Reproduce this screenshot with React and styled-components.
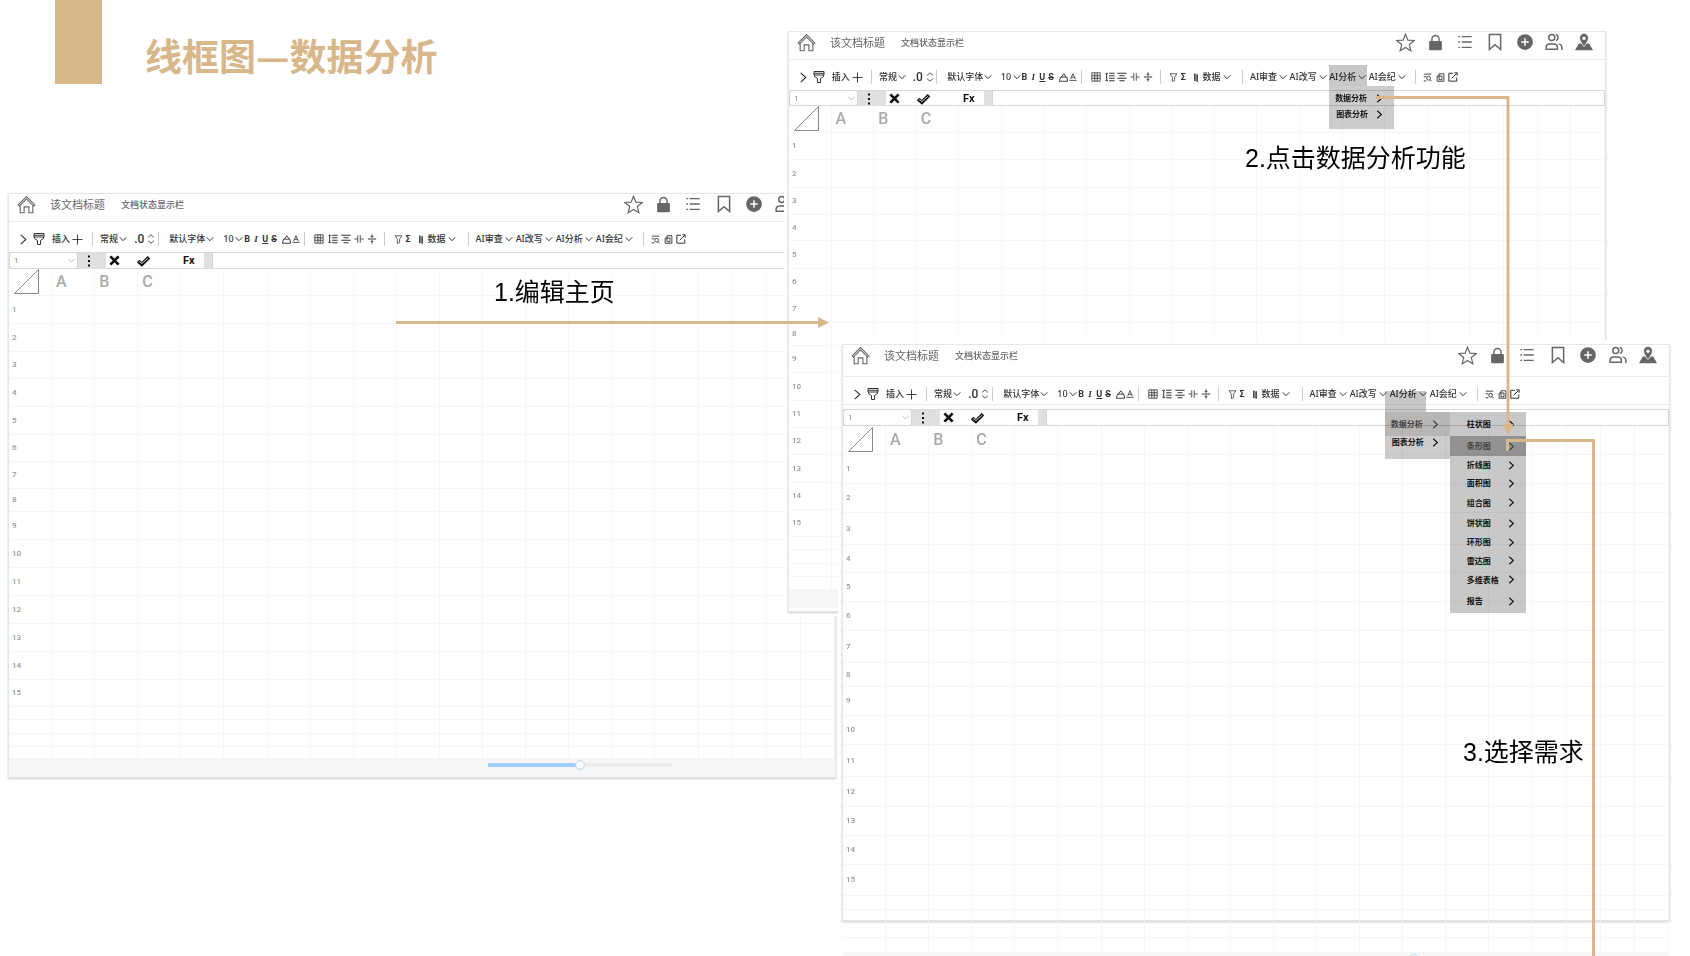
import React from 'react'
import styled, { createGlobalStyle, css } from 'styled-components'

const GlobalStyle = createGlobalStyle`
*, *::before, *::after {
  box-sizing: border-box;
}

body {
  margin: 0;
  background: #fff;
  color: #333;
  font-family: "Noto Sans", "Noto Sans CJK SC", sans-serif;
}

button, input, select {
  margin: 0;
  padding: 0;
  border: 0;
  background: none;
  color: inherit;
  font: inherit;
}
`

const gold = '#d8b78b'

const Board = styled.main`
position: relative;
width: 100%;
min-height: 100vh;
overflow: hidden;
`

const Heading = styled.header`
display: flex;
gap: 43px;
padding-left: 55px;
`

const Marker = styled.span`
width: 47px;
height: 84px;
background: ${gold};
`

const Title = styled.h1`
margin: 0;
padding-top: 29px;
color: ${gold};
font-family: "Noto Sans CJK SC", sans-serif;
font-size: 37px;
font-weight: 700;
line-height: 52px;
`

// each sheet is a window lying on the board
const Frame = styled.section`
position: absolute;
z-index: ${props => props.$z};
left: ${props => props.$x}px;
top: ${props => props.$y}px;
width: ${props => props.$width};
height: ${props => props.$height}px;
background: #fff;
border: 1px solid #e6e6e6;
box-shadow: 0 1px 2px rgba(0, 0, 0, 0.2), 0 0 0 4px #fff;
`

const DocBar = styled.div`
display: flex;
align-items: flex-start;
height: ${props => props.$height}px;
padding: 0 6px 0 8px;
border-bottom: 1px solid #ececec;
line-height: 21px;
color: #666;
`

const DocTitle = styled.h2`
margin: 0 16px 0 14px;
font-size: 11px;
font-weight: 400;
`

const DocStatus = styled.span`
font-size: 9px;
font-weight: 500;
`

const IconButton = styled.button`
display: flex;
align-items: center;
justify-content: ${props => props.$center ? 'center' : 'flex-start'};
height: 20px;
color: inherit;
cursor: pointer;

svg {
  flex: none;
}
`

const DocActions = styled.div`
display: grid;
grid-template-columns: repeat(7, 1fr);
width: 26%;
margin-left: auto;
`

const ToolBar = styled.div`
display: grid;
grid-template-columns: ${props => props.$columns};
align-items: center;
height: ${props => props.$height}px;
margin-bottom: ${props => props.$gap}px;
padding: 7px 0 3px 9px;
border-bottom: ${props => props.$gap ? '1px solid #ececec' : '0'};
color: #333;
font-size: 9px;
font-weight: 500;
line-height: 20px;
`

const Tool = styled.div`
position: relative;
display: flex;
align-items: center;
height: 20px;
white-space: nowrap;
`

const ToolButton = styled.button`
display: flex;
align-items: center;
gap: 2px;
height: 20px;
cursor: pointer;

svg {
  flex: none;
}
`

const Glyph = styled.span`
font-family: ${props => props.$serif ? '"Liberation Serif", serif' : 'Roboto, sans-serif'};
font-size: 9px;
font-weight: 700;
font-style: ${props => props.$italic ? 'italic' : 'normal'};
text-decoration: ${props => props.$line || 'none'};
`

const Decimal = styled.span`
font-family: Roboto, sans-serif;
font-size: 12px;
`

const Divider = styled.span`
width: 1px;
height: 14px;
background: #ccc;
`

const Picker = styled.label`
display: flex;
align-items: center;
gap: 1px;

select {
  width: ${props => props.$width}px;
  height: 20px;
  appearance: none;
}
`

const Popover = styled.div`
position: absolute;
top: ${props => props.$top}px;
left: ${props => props.$left}px;
z-index: 2;
mix-blend-mode: multiply;
color: #111;
font-size: 8px;
font-weight: 700;
line-height: 16px;
`

const Tab = styled.div`
width: ${props => props.$width}px;
height: 21px;
background: #c9c7c7;
`

const Menu = styled.div`
width: ${props => props.$width}px;
height: ${props => props.$height}px;
padding-top: ${props => props.$top}px;
background: ${props => props.$sub ? '#c8c8c8' : '#cdcbcb'};

${props => props.$sub && css`
  position: absolute;
  top: 21px;
  left: 100%;
`}
`

const MenuItem = styled.button`
display: flex;
align-items: center;
justify-content: space-between;
width: 100%;
height: ${props => props.$height}px;
padding: 0 10px 0 ${props => props.$indent}px;
background: ${props => props.$active || 'none'};
color: ${props => props.$active ? '#444' : 'inherit'};
cursor: pointer;
`

const FormulaBar = styled.div`
display: flex;
height: ${props => props.$height}px;
border-top: 1px solid #d8d8d8;
background: #e0e0e0;
color: #111;
`

const NameBox = styled.label`
display: flex;
align-items: center;
width: 69px;
padding: 0 2px 0 4px;
background: #fff;
border: 1px solid #d6d6d6;
border-top: 0;
border-radius: 3px;
color: #888;

select {
  flex: 1;
  font-family: Roboto, sans-serif;
  font-size: 8px;
  appearance: none;
}
`

const DotsButton = styled.button`
display: flex;
align-items: center;
width: 28px;
padding-left: 5px;
`

const FormulaActions = styled.div`
display: flex;
align-items: center;
width: 98px;
margin-right: 8px;
padding-left: 3px;
background: #fff;
border-bottom: 1px solid #d6d6d6;

button {
  display: flex;
  align-items: center;
  height: 14px;
}

button + button {
  margin-left: 17px;
}

button:last-child {
  margin-left: 33px;
  font-family: Roboto, sans-serif;
  font-size: 11px;
  font-weight: 700;
}
`

const FormulaInput = styled.input`
flex: 1;
min-width: 0;
padding: 0 4px;
background: #fff;
border: 1px solid #d6d6d6;
border-top: 0;
font-size: 9px;
`

const Grid = styled.table`
width: 100%;
table-layout: fixed;
border-spacing: 0;
font-family: Roboto, sans-serif;

th, td {
  padding: 0;
  border: 0 solid #f6f6f6;
  border-width: 0 1px 1px 0;
  text-align: left;
}
`

const Row = styled.tr`
height: ${props => props.$height}px;

th {
  padding-left: 3px;
  color: #999;
  font-size: 8px;
  font-weight: 500;
  line-height: 12px;
}
`

const ColumnRow = styled.tr`
height: ${props => props.$height}px;

th {
  padding-left: 4px;
  color: #aaa;
  font-size: 16px;
  font-weight: 500;
  line-height: 20px;
}

svg {
  display: block;
}
`

const Footer = styled.div`
display: flex;
height: 18px;
background: #f6f6f6;
`

const Zoom = styled.input`
width: 184px;
height: 12px;
margin-left: 58%;
appearance: none;
background: linear-gradient(90deg, #a3ccf7 50%, #ececec 50%) center / 100% 4px no-repeat;

&::-webkit-slider-thumb {
  appearance: none;
  width: 10px;
  height: 10px;
  background: #f8fbff;
  border: 1px solid #bdd9f6;
  border-radius: 50%;
}
`

const Note = styled.p`
position: absolute;
z-index: 5;
left: ${props => props.$x}px;
top: ${props => props.$y}px;
margin: 0;
color: #000;
font-family: "Liberation Sans", "Noto Sans CJK SC", sans-serif;
font-size: 25px;
line-height: 36px;
white-space: nowrap;
`

const Connectors = styled.svg`
position: absolute;
inset: 0;
z-index: 4;
width: 100%;
height: 100%;
pointer-events: none;
`

const Svg = ({ size = 10, w = 2, children, ...rest }) => (
  <svg width={size} height={size} viewBox="0 0 24 24" fill="none" stroke="currentColor" strokeWidth={w} aria-hidden="true" {...rest}>
    {children}
  </svg>
)

const Down = () => <Svg size={8} w={3}><path d="M2 7l10 10L22 7" /></Svg>
const Right = ({ size = 9, w = 3 }) => <Svg size={size} w={w}><path d="M6 2l11 10L6 22" /></Svg>

const icons = {
  home: <Svg size={19} w={1.4}><path d="M1.500 12.500L12 2l10.500 10.500-1.500 1.500L12 5l-9 9zM4 13v9.500h5V15h6v7.500h5V13" /></Svg>,
  star: <Svg size={19} w={1.5}><path d="M12 1.500l3 7.500 8 .5-6.200 5.100 2 7.900L12 18.200 5.200 22.500l2-7.900L1 9.500l8-.5z" /></Svg>,
  lock: <Svg size={17}><rect x="3" y="10" width="18" height="13" rx="1.500" fill="currentColor" stroke="none" /><path d="M7 11V7a5 5 0 0 1 10 0v4" /></Svg>,
  list: <Svg size={16}><path d="M7 4h15M7 12h15M7 20h15M2 4h2.500M2 12h2.500M2 20h2.500" /></Svg>,
  bookmark: <Svg size={18}><path d="M4.500 2h15v20L12 15.500 4.500 22z" /></Svg>,
  add: <Svg size={18}><circle cx="12" cy="12" r="10.500" fill="currentColor" stroke="none" /><path d="M12 7v10M7 12h10" stroke="#fff" /></Svg>,
  users: <Svg size={18}><circle cx="9" cy="6" r="4" /><path d="M14.500 2a4.200 4.200 0 0 1 0 8M1.500 21.500V19a4.500 4.500 0 0 1 4.500-4.500h6a4.500 4.500 0 0 1 4.500 4.500v2.500zM18 14.500c3 .5 4.500 2.500 4.500 5v3" /></Svg>,
  person: <Svg size={18}><path d="M0 23l5-9h14l5 9z" fill="currentColor" stroke="none" /><path d="M12 0.500a6 6 0 0 0-6 6.200c0 4.300 6 11.300 6 11.300s6-7 6-11.300a6 6 0 0 0-6-6.200z" fill="currentColor" stroke="#fff" strokeWidth="1.200" /><circle cx="12" cy="7" r="2.200" fill="#fff" stroke="none" /></Svg>,
  brush: <Svg size={12}><path d="M2 1h20v7H2zM2 4.500h20M3 8v3l6 4v8h6v-8l6-4V8" /></Svg>,
  plus: <Svg size={11}><path d="M12 1v22M1 12h22" /></Svg>,
  stepper: <Svg size={10}><path d="M5 8l7-6 7 6M5 16l7 6 7-6" /></Svg>,
  bucket: <Svg size={9} w={2.5}><path d="M6 11L13 2l6 9M4 11h17l2 11H1z" /></Svg>,
  tint: <Svg size={8} w={2.5}><path d="M5 18L12 2l7 16M7 13h10M1 22h22" /></Svg>,
  table: <Svg size={10}><path d="M2 2h20v20H2zM2 9h20M2 15h20M9 2v20M15 2v20" /></Svg>,
  spacing: <Svg size={10} w={2.4}><path d="M10 3h13M10 9h13M10 15h13M10 21h13M4 3v18M1 5l3-3 3 3M1 19l3 3 3-3" /></Svg>,
  center: <Svg size={10} w={2.4}><path d="M1 3h22M6 9h12M1 15h22M6 21h12" /></Svg>,
  split: <Svg size={10}><path d="M1 12h7M16 12h7M9 3v18M15 3v18" /></Svg>,
  merge: <Svg size={10} w={2.4}><path d="M2 12h20M12 1v7M12 16v7M9 5l3 3 3-3M9 19l3-3 3 3" /></Svg>,
  filter: <Svg size={9}><path d="M3 2h18l-6 9v9l-6 3V11z" /></Svg>,
  bars: <Svg size={9} w={4}><path d="M5 1v20M11 3v20" /></Svg>,
  find: <Svg size={9} w={2.4}><path d="M2 3h20M2 10h7M2 21h7" /><circle cx="15" cy="14" r="5" /><path d="M19 18l4 4" /></Svg>,
  copy: <Svg size={9} w={2.4}><path d="M8 2h13v20H3V8h5zM8 8h8v10H8z" /></Svg>,
  share: <Svg size={10} w={2.4}><path d="M12 3H2v19h19V13M9 15L21 3M15 2h7v7" /></Svg>,
  cross: <Svg size={11} w={6}><path d="M3 3l18 18M21 3L3 21" /></Svg>,
  check: <Svg size={13}><path d="M2 13l7 6L22 6" strokeWidth="6.500" /><path d="M4 14l5 3.500L20 8" stroke="#fff" strokeWidth="1.500" /></Svg>,
  dots: <Svg size={12}><path d="M12 1v4M12 10v4M12 19v4" strokeWidth="4" /></Svg>,
}

const docActions = [
  ['收藏', 'star'],
  ['锁定', 'lock'],
  ['目录', 'list'],
  ['书签', 'bookmark'],
  ['添加', 'add'],
  ['协作', 'users'],
  ['账户', 'person'],
]

// span is the share of the toolbar's width
const tools = [
  { span: 15, icon: 'chevron', label: '展开' },
  { span: 19, icon: 'brush', label: '格式刷' },
  { span: 40, text: '插入', icon: 'plus' },
  { span: 8, divider: true },
  { span: 34, pick: '常规', width: 18, label: '格式' },
  { span: 24, decimal: true, icon: 'stepper', label: '小数位' },
  { span: 11, divider: true },
  { span: 54, pick: '默认字体', width: 36, label: '字体' },
  { span: 21, pick: '10', width: 11, label: '字号' },
  { span: 10, glyph: 'B', label: '加粗' },
  { span: 8, glyph: 'I', italic: true, serif: true, label: '斜体' },
  { span: 9, glyph: 'U', line: 'underline', label: '下划线' },
  { span: 11, glyph: 'S', line: 'line-through', label: '删除线' },
  { span: 10, icon: 'bucket', label: '填充' },
  { span: 12, icon: 'tint', label: '字色' },
  { span: 10, divider: true },
  { span: 14, icon: 'table', label: '边框' },
  { span: 13, icon: 'spacing', label: '行距' },
  { span: 13, icon: 'center', label: '对齐' },
  { span: 13, icon: 'split', label: '拆分' },
  { span: 17, icon: 'merge', label: '合并' },
  { span: 9, divider: true },
  { span: 12, icon: 'filter', label: '筛选' },
  { span: 12, glyph: 'Σ', label: '求和' },
  { span: 10, icon: 'bars', label: '列' },
  { span: 40, text: '数据', drop: true },
  { span: 8, divider: true },
  { span: 40, text: 'AI审查', drop: true },
  { span: 40, text: 'AI改写', drop: true },
  { span: 40, text: 'AI分析', drop: true, menu: true },
  { span: 47, text: 'AI会纪', drop: true },
  { span: 8, divider: true },
  { span: 13, icon: 'find', label: '查找' },
  { span: 12, icon: 'copy', label: '复制' },
  { span: 159, icon: 'share', label: '分享' },
]

const toolColumns = tools.map(t => `minmax(0, ${t.span}fr)`).join(' ')

const charts = [
  ['柱状图', 24],
  ['条形图', 20],
  ['折线图', 18],
  ['面积图', 18],
  ['组合图', 21],
  ['饼状图', 20],
  ['环形图', 18],
  ['雷达图', 19],
  ['多维表格', 19],
  ['报告', 24],
]

// shares again: sixteen wide columns, then four narrow ones
const columns = [...Array(16).fill(43), ...Array(4).fill(34)]
const columnTotal = columns.reduce((sum, width) => sum + width, 0)

const sheets = [
  {
    x: 8, y: 193, z: 1, width: '49%', height: 585,
    doc: 28, tool: 30, gap: 0, formula: 17, head: 27,
    rows: [28, 28, 27, 28, 28, 27, 27, 23, 28, 28, 28, 28, 28, 28, 27, 13, 14, 13, 12],
  },
  {
    x: 788, y: 31, z: 2, width: 'calc(49% - 10px)', height: 581,
    doc: 28, tool: 30, gap: 0, formula: 16, head: 26,
    rows: [27, 28, 27, 26, 28, 27, 27, 23, 27, 28, 27, 27, 28, 27, 27, 13, 14, 13, 13],
    menu: 'analysis',
  },
  {
    x: 842, y: 344, z: 3, width: '49%', height: 577,
    doc: 32, tool: 28, gap: 4, formula: 17, head: 29,
    rows: [29, 29, 32, 28, 29, 29, 32, 24, 29, 29, 32, 30, 29, 29, 31, 14, 14, 14, 15],
    menu: 'charts',
  },
]

const AnalysisMenu = ({ open }) => {
  const wide = open === 'charts'
  return (
    <Popover $top={wide ? 7 : -2} $left={wide ? -5 : 0}>
      <Tab $width={wide ? 41 : 38} />
      <Menu $width={65} $height={wide ? 47 : 43} $top={wide ? 0 : 4}>
        <MenuItem $height={wide ? 24 : 16} $indent={6} $active={wide && '#b8b6b5'}>数据分析<Right /></MenuItem>
        <MenuItem $height={wide ? 12 : 16} $indent={7}>图表分析<Right /></MenuItem>
      </Menu>
      {wide && (
        <Menu $sub $width={76} $height={201} $top={0}>
          {charts.map(([name, height], i) => (
            <MenuItem key={name} $height={height} $indent={17} $active={i === 1 && '#929292'}>{name}<Right /></MenuItem>
          ))}
        </Menu>
      )}
    </Popover>
  )
}

const ToolItem = ({ tool, menu }) => {
  if (tool.divider) return <Divider />
  if (tool.pick) {
    return (
      <Tool>
        <Picker $width={tool.width}>
          <select aria-label={tool.label}><option>{tool.pick}</option></select>
          <Down />
        </Picker>
      </Tool>
    )
  }
  return (
    <Tool>
      <ToolButton aria-label={tool.label}>
        {tool.text}
        {tool.decimal && <Decimal>.0</Decimal>}
        {tool.glyph && <Glyph $italic={tool.italic} $serif={tool.serif} $line={tool.line}>{tool.glyph}</Glyph>}
        {tool.icon === 'chevron' ? <Right size={11} w={2.5} /> : icons[tool.icon]}
        {tool.drop && <Down />}
      </ToolButton>
      {tool.menu && menu && <AnalysisMenu open={menu} />}
    </Tool>
  )
}

const Sheet = ({ sheet }) => (
  <Frame $x={sheet.x} $y={sheet.y} $z={sheet.z} $width={sheet.width} $height={sheet.height}>
    <DocBar $height={sheet.doc}>
      <IconButton aria-label="主页">{icons.home}</IconButton>
      <DocTitle>该文档标题</DocTitle>
      <DocStatus>文档状态显示栏</DocStatus>
      <DocActions>
        {docActions.map(([label, icon]) => (
          <IconButton key={icon} $center aria-label={label}>{icons[icon]}</IconButton>
        ))}
      </DocActions>
    </DocBar>
    <ToolBar $columns={toolColumns} $height={sheet.tool} $gap={sheet.gap}>
      {tools.map((tool, i) => <ToolItem key={i} tool={tool} menu={sheet.menu} />)}
    </ToolBar>
    <FormulaBar $height={sheet.formula}>
      <NameBox>
        <select aria-label="单元格"><option>1</option></select>
        <Svg size={7}><path d="M2 7l10 10L22 7" /></Svg>
      </NameBox>
      <DotsButton aria-label="更多">{icons.dots}</DotsButton>
      <FormulaActions>
        <button aria-label="取消">{icons.cross}</button>
        <button aria-label="确认">{icons.check}</button>
        <button>Fx</button>
      </FormulaActions>
      <FormulaInput aria-label="公式" />
    </FormulaBar>
    <Grid>
      <colgroup>
        {columns.map((width, i) => <col key={i} style={{ width: `${width / columnTotal * 100}%` }} />)}
      </colgroup>
      <thead>
        <ColumnRow $height={sheet.head}>
          <th aria-label="全选">
            <svg width="26" height="26" viewBox="0 0 26 26" fill="none" stroke="#888"><path d="M1.500 24.500L25.500 0.500v24z" /></svg>
          </th>
          {columns.slice(1).map((_, i) => <th key={i}>{'ABC'[i]}</th>)}
        </ColumnRow>
      </thead>
      <tbody>
        {sheet.rows.map((height, r) => (
          <Row key={r} $height={height}>
            <th>{r < 15 ? r + 1 : null}</th>
            {columns.slice(1).map((_, i) => <td key={i} />)}
          </Row>
        ))}
      </tbody>
    </Grid>
    <Footer>
      <Zoom type="range" defaultValue={50} aria-label="缩放" />
    </Footer>
  </Frame>
)

const App = () => {
  return (
    <Board>
      <GlobalStyle />
      <Heading>
        <Marker />
        <Title>线框图—数据分析</Title>
      </Heading>
      {sheets.map(sheet => <Sheet key={sheet.x} sheet={sheet} />)}
      <Connectors fill="none" stroke={gold} strokeWidth="3" aria-hidden="true">
        <path d="M396 322.500H820" />
        <path d="M818 317l11 5.500-11 5.500z" fill={gold} stroke="none" />
        <path d="M1376 97.500H1508V426" />
        <path d="M1502.500 424h11l-5.500 11z" fill={gold} stroke="none" />
        <path d="M1507.500 451V440.500H1593.500V2000" />
      </Connectors>
      <Note $x={494} $y={274}>1.编辑主页</Note>
      <Note $x={1245} $y={140}>2.点击数据分析功能</Note>
      <Note $x={1463} $y={734}>3.选择需求</Note>
    </Board>
  )
}

export default App
